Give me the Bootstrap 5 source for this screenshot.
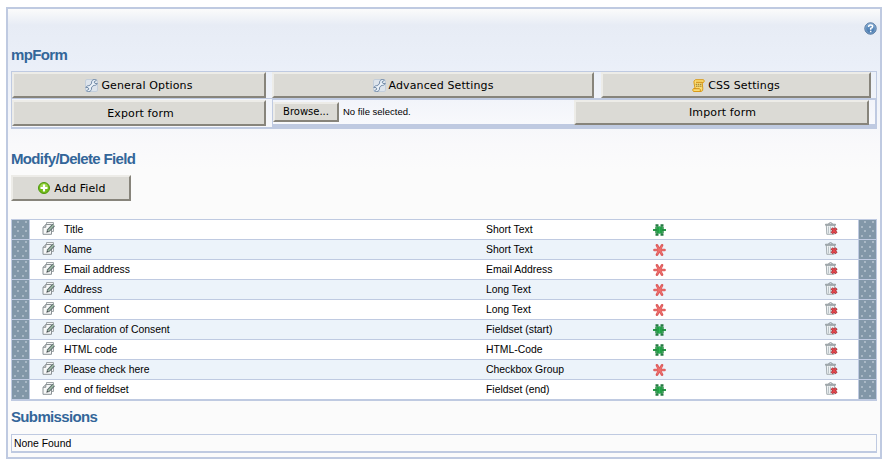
<!DOCTYPE html>
<html lang="en">
<head>
<meta charset="utf-8">
<title>mpForm</title>
<link href="https://cdn.jsdelivr.net/npm/bootstrap@5.3.0/dist/css/bootstrap.min.css" rel="stylesheet">
<style>
:root{--line:#bfcae1}
body{font-family:"Liberation Sans",Arial,sans-serif;font-size:10.4px;line-height:12px;color:#000;background:#fff;padding:7px 9px 6px 6px;height:465px;overflow:hidden}
.panel{height:452px;border:2px solid var(--line);padding:0 3px;background:linear-gradient(#fbfbfb 0,#e7ecf5 16px,#eaeff8 55px,#f9f9fb 135px,#fbfbfb 160px,#fbfbfb)}
.help-line{height:36px;padding-top:13px}
h2{font-size:15px;line-height:20px;font-weight:bold;letter-spacing:-.65px;color:#336699;margin:0}
.modify{margin-top:20px}
.subs{margin-top:6px}
.tools{height:58px;margin-top:6px;border:1px solid var(--line);border-bottom-width:2px}
.tools-top{height:27px;border-bottom:1px solid var(--line)}
.raised{display:flex;align-items:center;justify-content:center;background:#dbdad5;border:2px solid;border-color:#edece8 #87847b #87847b #edece8;border-radius:0;font:11px/14px "DejaVu Sans",sans-serif;letter-spacing:.12px;color:#000;padding:1px 0 0;height:26px;gap:3px;flex:none}
.w-general{width:254px}.w-adv{width:322px;margin-left:6px}.w-css{width:270px;margin-left:7px}
.w-export{width:254px;margin-top:1px;padding-left:3px}
.import-box{width:605px;height:30px;margin:-1px -1px 0 6px;border:1px solid var(--line);border-width:2px 2px 4px 1px;background:linear-gradient(#f2f4fa,#f8f9fc)}
.browse{width:66px;height:20px;margin-top:2px;padding:0;font-size:10px;letter-spacing:0}
.nofile{width:235px;padding:6px 0 0 4px;font-size:9.5px}
.w-import{width:295px;height:25px;padding:0 0 0 2px}
.add{width:120px;margin-top:6px;padding-left:2px;gap:4px}
.add svg{margin-top:-2px}
.fields{border:1px solid var(--line);border-width:1px 1px 2px;margin-top:18px}
.field-row{height:20px;border-bottom:1px solid var(--line);background:#fff}
.field-row:nth-child(even){background:#ecf3fa}
.field-row:last-child{height:19px;border-bottom:0}
.grip{width:18px;height:19px;border-right:1px solid var(--line);background:#8197a9}
.grip.end{width:18px;border-left:1px solid var(--line);border-right:1px solid var(--line)}
.c-edit{width:34px;padding-left:12px;padding-top:2px}.c-name{width:422px;padding-top:4px}.c-type{width:167px;padding-top:4px}.c-req{width:172px;padding-top:3px}.c-del{width:33px;padding-top:2px}
.none-box{height:19px;border:1px solid var(--line);border-bottom-width:2px;padding:3px 2px;margin-top:7px}
svg{display:block;flex:none}
</style>
<script src="https://cdn.jsdelivr.net/npm/bootstrap@5.3.0/dist/js/bootstrap.bundle.min.js"></script>
</head>
<body>
<svg width="0" height="0" class="position-absolute">
<defs>
<pattern id="dots" width="8" height="9" patternUnits="userSpaceOnUse"><rect width="8" height="9" fill="#8297a8"/><rect x="5" y="1" width="2" height="2" fill="#a9b8c5"/><rect x="2" y="6" width="2" height="2" fill="#a9b8c5"/></pattern>
<linearGradient id="blue" x2="0" y2="1"><stop stop-color="#7ba6d0"/><stop offset="1" stop-color="#3c6fa8"/></linearGradient>
</defs>
<symbol id="wrench" viewBox="0 0 13 13"><rect x=".5" y=".5" width="12" height="12" rx="1.5" fill="#dde4ec" stroke="#c3cedb"/><path d="M3.500 9.500 9 4" stroke="#6d86a3" stroke-width="3.600"/><path d="M11.500 1.200A3 3 0 1 0 12.300 4.500L10 4.500 9 3zM1.500 11.800A3 3 0 1 0 .8 8.500L3 8.500 4 10z" fill="#e4edf6" stroke="#6d86a3" stroke-width=".9"/><path d="M4 9 8.800 4.200" stroke="#edf3f9" stroke-width="2"/></symbol>
<symbol id="scroll" viewBox="0 0 13 13"><path d="M3.500.7h8q1.700 1.200 0 2.800h-1.300l.6 5.800q.5 3-1.800 3.200H1.500q-1.700-1.500 0-3h1.600L2.200 5Q1 1.500 3.500.7z" fill="#fbdc72" stroke="#d89a1b"/><path d="M2 9.700h5.500q1.500 1 .7 2.500M4 3.300h6.500" stroke="#d18d14" fill="none"/><path d="M3.700 5.300h1.500M5.900 5.300h1.400M8 5.300h1.400M4 7.200h1.500M6.100 7.200h1.400M8.100 7.200h1.400" stroke="#8d7430"/></symbol>
<symbol id="plus" viewBox="0 0 12 12"><circle cx="6" cy="6" r="5.500" fill="#72bc18" stroke="#4e9610"/><path d="M2 5.500a4 4 0 0 1 8 0z" fill="#a0d94e"/><path d="M6 2.500v7M2.500 6h7" stroke="#fff" stroke-width="2.200"/></symbol>
<symbol id="help" viewBox="0 0 13 13"><circle cx="6.500" cy="6.500" r="5.700" fill="url(#blue)" stroke="#54779f"/><circle cx="6.500" cy="6.500" r="4.800" fill="none" stroke="#8fb0d3" stroke-width=".7"/><path d="M4.600 5q0-1.900 2-1.900t2 1.500Q8.500 5.800 6.700 6.400V7.800M6.700 8.700v1.500" fill="none" stroke="#fff" stroke-width="1.500"/></symbol>
<symbol id="edit" viewBox="0 0 14 13"><path d="M4.500.5h7v9h-7z" fill="#f1f3f3" stroke="#a0a6a9"/><path d="M3.800 2.500h5.700v9.800H1V5.200z" fill="#f7f8f8" stroke="#8c9396"/><path d="M1 5.300h2.800V2.500" fill="#c7cccc" stroke="#8c9396"/><path d="M5.800 9.200 11.700 3" stroke="#5d6c6e" stroke-width="3.400"/><path d="M6 9 11.700 3" stroke="#a1bda6" stroke-width="1.500"/><path d="M4.300 10.800 5 8.300l1.900 1.800z" fill="#454c4e"/></symbol>
<symbol id="bin" viewBox="0 0 13 13"><path d="M1.300 3h8.400l-.5 9.300H1.800z" fill="#eef2f3" stroke="#a5adb1"/><path d="M.5 2.200h10v1H.5z" fill="#ccd2d5" stroke="#899297" stroke-width=".8"/><path d="M3.500 1.500q2-1.600 4 0" stroke="#7f898e" fill="none"/><path d="M3.500 4.500v7M5.500 4.500v7" stroke="#bcc5c9"/><path d="M6.700 6.200 11.500 11.200M11.500 6.200 6.700 11.200" stroke="#a63840" stroke-width="3"/><path d="M7 6.500l4.200 4.400M11.200 6.500 7 10.900" stroke="#e8484d" stroke-width="1.500"/></symbol>
<symbol id="star-on" viewBox="0 0 14 14"><path d="M0 7h13" stroke="#2a9a4c" stroke-width="2"/><path d="M3.500 3.500h6v7h-6z" fill="#22a047"/><path d="M2.500 2.500h3M7.500 2.500h3M2.500 11.500h3M7.500 11.500h3" stroke="#257a42" stroke-width="2.400"/><path d="M3 4v6M10 4v6" stroke="#24893f" stroke-width="1.400"/><path d="M6.500 3.500v7" stroke="#2fb457"/></symbol>
<symbol id="star-off" viewBox="0 0 14 14"><path d="M1.500 7h10M4 2.300l5 9.400M9 2.300l-5 9.400" stroke="#dc5c5c" stroke-width="2.700" stroke-linecap="round"/><path d="M1.500 7h10M4 3l5 8M9 3l-5 8" stroke="#ee706d" stroke-width="1.200"/></symbol>
</svg>
<main class="panel">
 <div class="help-line d-flex justify-content-end"><svg width="13" height="13"><use href="#help"/></svg></div>
 <h2>mpForm</h2>
 <div class="tools">
  <div class="tools-top d-flex">
   <button class="raised w-general"><svg width="13" height="13"><use href="#wrench"/></svg>General Options</button>
   <button class="raised w-adv"><svg width="13" height="13"><use href="#wrench"/></svg>Advanced Settings</button>
   <button class="raised w-css"><svg width="13" height="13"><use href="#scroll"/></svg>CSS Settings</button>
  </div>
  <div class="d-flex"><button class="raised w-export">Export form</button>
   <div class="import-box d-flex"><button class="raised browse">Browse...</button><span class="nofile">No file selected.</span><button class="raised w-import">Import form</button></div>
  </div>
 </div>
 <h2 class="modify">Modify/Delete Field</h2>
 <button class="raised add"><svg width="12" height="12"><use href="#plus"/></svg>Add Field</button>
 <div class="fields" id="fields"></div>
 <h2 class="subs">Submissions</h2>
 <div class="none-box">None Found</div>
</main>
<script>
const rows=[["Title","Short Text",1],["Name","Short Text",0],["Email address","Email Address",0],["Address","Long Text",0],["Comment","Long Text",0],["Declaration of Consent","Fieldset (start)",1],["HTML code","HTML-Code",1],["Please check here","Checkbox Group",0],["end of fieldset","Fieldset (end)",1]];
const grip='<svg width="17" height="19"><rect width="17" height="19" fill="url(#dots)"/></svg>';
document.getElementById('fields').innerHTML=rows.map(([n,t,on])=>`<div class="field-row d-flex"><div class="grip">${grip}</div><div class="c-edit"><svg width="14" height="13"><use href="#edit"/></svg></div><div class="c-name">${n}</div><div class="c-type">${t}</div><div class="c-req"><svg width="14" height="14"><use href="#star-${on?'on':'off'}"/></svg></div><div class="c-del"><svg width="13" height="13"><use href="#bin"/></svg></div><div class="grip end">${grip}</div></div>`).join('');
</script>
</body>
</html>
